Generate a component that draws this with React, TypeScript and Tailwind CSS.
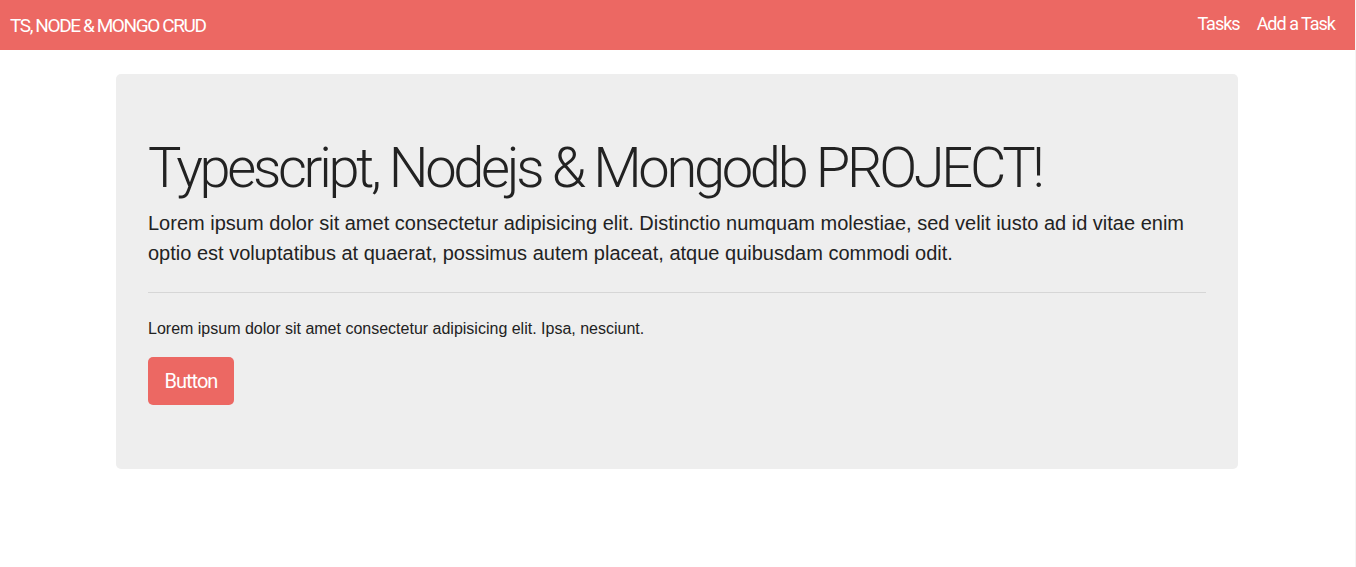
import React from 'react';

const narrow = "font-['Roboto','Liberation_Sans',sans-serif]";

const Navbar: React.FC = () => (
  <nav className="h-[50px] bg-[#ec6863] flex items-center justify-between pl-[10px] pr-[20px] text-white">
    <a href="#" className={`${narrow} text-[19px] leading-none tracking-[-1.4px]`}>TS, NODE &amp; MONGO CRUD</a>
    <ul className="flex items-center gap-[17px]">
      <li><a href="#" className={`${narrow} text-[18px] leading-none tracking-[-1px]`}>Tasks</a></li>
      <li><a href="#" className={`${narrow} text-[18px] leading-none tracking-[-1px]`}>Add a Task</a></li>
    </ul>
  </nav>
);

export default function App() {
  return (
    <div className="min-h-[567px] bg-white font-['Liberation_Sans',Arial,sans-serif] text-[#222] border-r border-[#f4f4f4]">
      <Navbar />
      <div className="w-[1122px] ml-[116px] mt-6">
        <div className="bg-[#eee] rounded-[5px] px-8 py-16">
          <h1 className={`${narrow} font-light text-[56px] leading-[1.1] tracking-[-3.3px] mb-2 text-[#222]`}>
            Typescript, Nodejs &amp; Mongodb PROJECT!
          </h1>
          <p className="text-[20px] leading-[1.5]">
            Lorem ipsum dolor sit amet consectetur adipisicing elit. Distinctio numquam molestiae, sed velit iusto ad id vitae enim optio est voluptatibus at quaerat, possimus autem placeat, atque quibusdam commodi odit.
          </p>
          <hr className="my-6 border-t border-[#d6d6d6]" />
          <p className="text-[16px] leading-[1.5] mb-4">
            Lorem ipsum dolor sit amet consectetur adipisicing elit. Ipsa, nesciunt.
          </p>
          <a href="#" className={`${narrow} flex items-center justify-center w-[86px] h-[48px] bg-[#ec6863] text-white text-[20px] tracking-[-1px] rounded-[5px]`}>
            Button
          </a>
        </div>
      </div>
    </div>
  );
}
